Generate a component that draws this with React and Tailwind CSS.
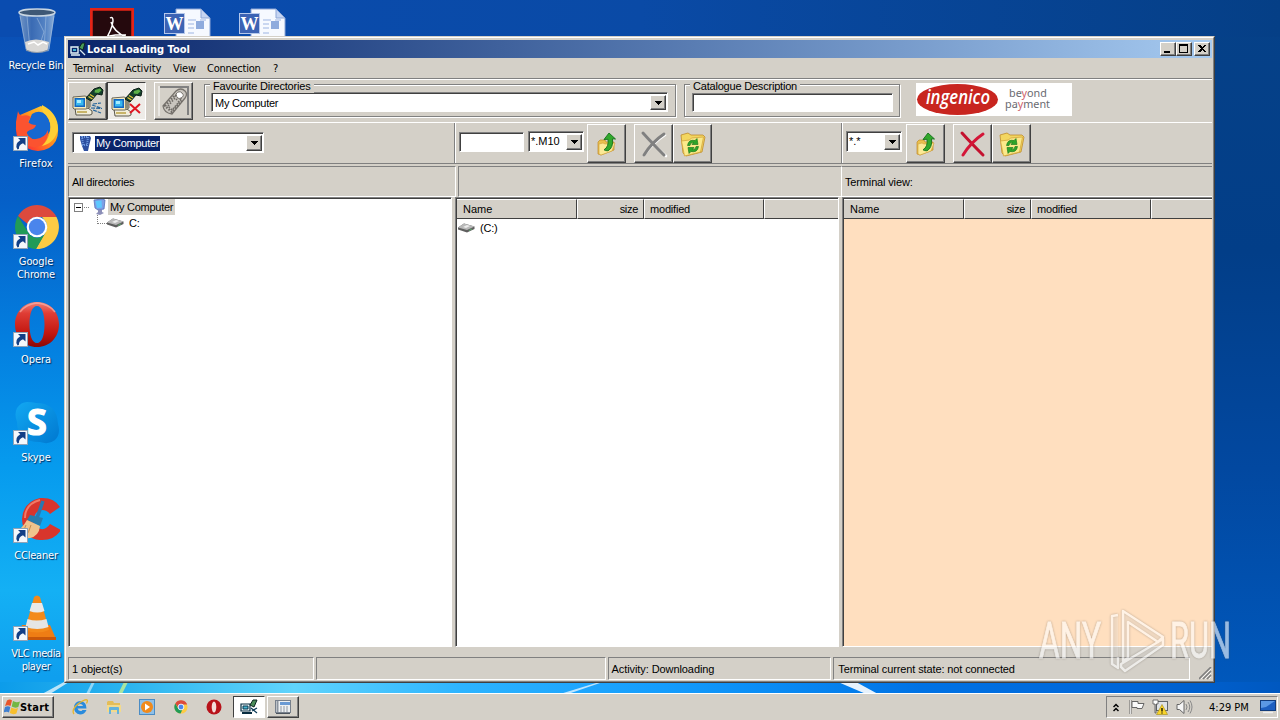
import React from "react";

const SANS = "font-['Liberation_Sans',Arial,sans-serif] text-[11px] leading-[13px] whitespace-nowrap text-black";
const UI = "font-['DejaVu_Sans_Condensed','DejaVu_Sans',sans-serif] [font-stretch:condensed] text-[11px] leading-[13px] whitespace-nowrap";
const SUNKEN = "border border-t-[#808080] border-l-[#808080] border-b-white border-r-white shadow-[inset_1px_1px_0_#404040]";
const RAISED = "bg-[#d4d0c8] border border-t-white border-l-white border-b-[#404040] border-r-[#404040] shadow-[inset_-1px_-1px_0_#808080]";

function Shortcut() {
  return (
    <g>
      <rect x="1.500" y="32.500" width="14" height="14" fill="#f4f8fc" stroke="#8fa3b8" />
      <path d="M13.500 34H6l2.300 2.300Q2 40 5.500 45.500q1.500-.5 1.500-1Q6.500 41 11 39.200l2.500 2.300z" fill="#123f86" />
    </g>
  );
}

function DesktopItem({ label, children, shortcut = true, tracking = "tracking-[-0.1px]" }) {
  return (
    <div className="flex h-[98px] w-[72px] flex-col items-center">
      <svg className="h-12 w-12 shrink-0" viewBox="0 0 48 48">
        {children}
        {shortcut && <Shortcut />}
      </svg>
      <div className={`${UI} ${tracking} mt-[5px] text-center text-white [text-shadow:1px_1px_1px_#00285a]`}>
        {label.map((l) => (
          <div key={l}>{l}</div>
        ))}
      </div>
    </div>
  );
}

function Desktop() {
  return (
    <div className="flex h-[693px] items-start">
      <div className="flex flex-col pt-1.5">
        <DesktopItem label={["Recycle Bin"]} shortcut={false} tracking="tracking-[-0.2px]">
          <defs>
            <linearGradient id="bin" x1="0" x2="1">
              <stop offset="0" stopColor="#7f9fc8" />
              <stop offset=".35" stopColor="#3f6eb4" />
              <stop offset=".75" stopColor="#5e8bc8" />
              <stop offset="1" stopColor="#9dbbdd" />
            </linearGradient>
          </defs>
          <path d="M7 6h36l-6 39q-12 4-23 0z" fill="url(#bin)" opacity=".9" />
          <path d="M8 10l6 33M15 10l3 34M34 10l-2 34M42 10l-5 33M25 12l7 14-4 12" stroke="#b8cee8" strokeWidth=".8" opacity=".6" fill="none" />
          <ellipse cx="25" cy="6.500" rx="18" ry="3.500" fill="#3e5876" stroke="#c9d6e2" strokeWidth="1.500" />
          <path d="M13 36q10-5 24 0l-1.500 8q-11 5-21 0z" fill="#d9d8d6" />
          <path d="M16 38l6-2 4 3 5-3 4 2" stroke="#fff" strokeWidth="1.500" fill="none" />
          <path d="M14 44q11 5 22 0" stroke="#8c98a6" fill="none" />
        </DesktopItem>
        <DesktopItem label={["Firefox"]} tracking="tracking-[0.15px]">
          <defs>
            <linearGradient id="ff" x1="1" x2="0" y1="0" y2="1">
              <stop offset="0" stopColor="#fff04a" />
              <stop offset=".4" stopColor="#ffa01c" />
              <stop offset=".75" stopColor="#ff4a2c" />
              <stop offset="1" stopColor="#e01865" />
            </linearGradient>
          </defs>
          <path d="M29 2q15 8 17 22 1 14-9 20-11 6-22 0Q3 37 4 23q0-7 4-12z" fill="url(#ff)" />
          <path d="M20 10q8-5 14 1 6 8 4 16-4 9-14 9-10-2-10-12z" fill="#1668d0" />
          <path d="M6 7q1 4 4 5 5-2 9 1-2 2-3 5 3 3 8 3-1 4-6 5-3 1-4 4 3 6 10 5 9-1 12-9 1 9-6 15-9 5-18-1Q3 32 4 18z" fill="#fb5330" />
          <path d="M30 1q-1 6 4 10 6 7 4 17-2 8-8 14 13-3 16-17Q46 9 30 1z" fill="#ffcf35" />
        </DesktopItem>
        <DesktopItem label={["Google", "Chrome"]}>
          <path d="M6 14A22 22 0 0 1 44 14L44.500 15H25a10 10 0 0 0-9.500 7z" fill="#dc4a3d" />
          <path d="M44.500 15A22 22 0 0 1 24 47L34 29a10 10 0 0 0 0-9l-4-5z" fill="#fdcb44" />
          <path d="M6 14A22 22 0 0 0 24 47l10-17a10 10 0 0 1-18 0z" fill="#219b57" />
          <circle cx="25" cy="25" r="10.300" fill="#fff" />
          <circle cx="25" cy="25" r="8.200" fill="#4a85ec" />
        </DesktopItem>
        <DesktopItem label={["Opera"]}>
          <defs>
            <linearGradient id="op" x1="0" x2="0" y1="0" y2="1">
              <stop offset="0" stopColor="#f08078" />
              <stop offset=".25" stopColor="#df3d35" />
              <stop offset=".7" stopColor="#c2160f" />
              <stop offset="1" stopColor="#8a0806" />
            </linearGradient>
          </defs>
          <path fillRule="evenodd" d="M25 2C38 2 47 12 47 24.500S38 47 25 47 3 37 3 24.500 12 2 25 2zM25 6c-5 0-7.500 8-7.500 18.500S20 43 25 43s7.500-8 7.500-18.500S30 6 25 6z" fill="url(#op)" />
          <path d="M8 12Q14 4 25 3q12 1 18 9" stroke="#f8b0a8" strokeWidth="1.500" fill="none" opacity=".7" />
        </DesktopItem>
        <DesktopItem label={["Skype"]}>
          <defs>
            <linearGradient id="sk" x1="0" x2="1" y1="0" y2="1">
              <stop offset="0" stopColor="#12a8f2" />
              <stop offset="1" stopColor="#0078d0" />
            </linearGradient>
          </defs>
          <path d="M15 4q5 0 9 1 21 0 22 21 3 10-3 16-6 5-15 2Q5 44 5 24 2 16 5 10q4-6 10-6z" fill="url(#sk)" />
          <text x="25" y="37" textAnchor="middle" fontSize="36" fontWeight="bold" fill="#fff" stroke="#fff" strokeWidth="1.200" fontFamily="Open Sans, sans-serif">S</text>
        </DesktopItem>
        <DesktopItem label={["CCleaner"]} tracking="tracking-[-0.2px]">
          <path d="M48 11Q42 1 28 2 11 6 10 23q1 20 18 21 14 1 21-10l-11-6q-4 6-9 5-7-1-7-9 0-9 8-10 5 0 8 4z" fill="#d8352c" />
          <path d="M28 4Q13 8 13 22" stroke="#f07a66" strokeWidth="2" fill="none" />
          <path d="M31 5l-7 20" stroke="#2a78b0" strokeWidth="3.500" />
          <path d="M18 19l13 3-3 8-13-6z" fill="#287cac" />
          <path d="M15 24l13 6q-1 10-10 12-9 2-16-5 8-4 13-13z" fill="#f0c38c" />
          <path d="M14 29q-2 7-6 10M19 29q-2 7-5 11" stroke="#c48b4e" fill="none" />
        </DesktopItem>
        <DesktopItem label={["VLC media", "player"]} tracking="tracking-[-0.4px]">
          <path d="M10 31h28l6 14H6z" fill="#ef7d14" />
          <path d="M6 43h38v3H6z" fill="#c9570a" />
          <path d="M22 3q3-3 6 0l9 33q-12 5-24 0z" fill="#f38a1b" />
          <path d="M20 9h10l2.500 8q-7 3-15 0z" fill="#e9e9e9" />
          <path d="M15.500 25q9 3 19 0l2 8q-11 4-23 0z" fill="#e5e5e5" />
        </DesktopItem>
      </div>
      <div className="flex gap-[30px] pt-2 pl-[18px]">
        <svg className="h-11 w-11" viewBox="0 0 44 44">
          <rect x="1" y="1" width="42" height="42" fill="#25090d" stroke="#e32417" strokeWidth="3.500" />
          <path d="M20 10q3-2 3 3-1 9-9 21M21 14q3 10 15 15M10 32q10-6 26-5" stroke="#fff" strokeWidth="1.500" fill="none" />
        </svg>
        <div className="flex gap-[27px]">
          {[0, 1].map((i) => (
            <svg key={i} className="h-11 w-12" viewBox="0 0 48 44">
              <path d="M12 1h25l9 9v34H12z" fill="#f6f9ff" stroke="#8da6d6" />
              <path d="M37 1v9h9z" fill="#c6d5f2" stroke="#8da6d6" />
              <path d="M24 12h8M24 16h6M24 20h6M24 25h6M36 12h6" stroke="#9db4e2" />
              <rect x="32" y="13" width="8" height="8" fill="#8fabdd" />
              <rect x=".5" y="5.500" width="20" height="20" fill="#3c63b4" stroke="#b5c8ec" />
              <text x="10.500" y="22" textAnchor="middle" fontSize="18" fontWeight="bold" fill="#fff" fontFamily="Liberation Serif, serif">W</text>
            </svg>
          ))}
        </div>
      </div>
    </div>
  );
}

function Arrow({ className = "w-4" }) {
  return (
    <span className={`flex shrink-0 items-center justify-center ${RAISED} ${className}`}>
      <svg className="h-1 w-[7px]" viewBox="0 0 7 4" shapeRendering="crispEdges"><path d="M0 0h7L3.500 4z" /></svg>
    </span>
  );
}

function TerminalPicture({ mode }) {
  return (
    <svg className="h-[30px] w-8" viewBox="0 0 32 30">
      <path d="M3 22h13l4 3v3l-2 1H4z" fill="#f2eeda" stroke="#4c483c" strokeWidth=".9" />
      <path d="M5 25h10v2H5z" fill="#c8b468" />
      <path d="M1 11l12-1 5 2v9l-4 2H2l-1-1z" fill="#f6ecc0" stroke="#4c483c" strokeWidth=".8" />
      <path d="M2.500 12h10.500v9H2.500z" fill="#1467c0" />
      <path d="M4 13.500h7.500v6H4z" fill="#38b8f0" />
      <path d="M5 14h4v3H5z" fill="#a6ecff" />
      <path d="M14 11l4 2v8l-4 1z" fill="#8f8c78" />
      <path d="M14 12l8-9 6-2 3 3-1 5-5-1-6 7z" fill="#15402c" stroke="#0b1e16" />
      <path d="M23 4l5-1.500 1.500 2-3 2.500-4-.500z" fill="#5cb048" />
      <path d="M18 8.500l4 2.500M16.500 10.500l4 2.500" stroke="#e8c83c" strokeWidth="1.300" />
      {mode === "on" ? (
        <path d="M20 19l9 3M19 22l11 .5M21 24l8 3M21 18l8-1" stroke="#23639b" strokeWidth="1.200" strokeDasharray="4 1" />
      ) : (
        <path d="M19 17l10 9M29 17l-10 9" stroke="#e01522" strokeWidth="2" />
      )}
    </svg>
  );
}

function UpFolder() {
  return (
    <svg className="h-6 w-6" viewBox="0 0 24 24">
      <path d="M3 10l2-2h5l1 2 8 0v8L6 23l-3-1z" fill="#e9c04e" stroke="#c08a28" strokeWidth=".7" />
      <path d="M4 12l4-1 2 1 10-1-3 8-11 4-2-1z" fill="#fbe996" stroke="#cf9d3c" strokeWidth=".6" />
      <path d="M14 1l6.500 6-3-.2q1 9-4.500 12-3 0-4-1 5-3 4-10.500L9 7.500z" fill="#32a92c" stroke="#14701a" strokeWidth=".9" />
    </svg>
  );
}

function RefreshFolder() {
  return (
    <svg className="h-[26px] w-[26px]" viewBox="0 0 26 26">
      <path d="M1 4l7-2 3 2 12 0 2 2-3 15-16 4-3-3z" fill="#f3d660" stroke="#bf8c29" strokeWidth=".8" />
      <path d="M1.500 10l8-1 2-2 12-1-3 15-16 4z" fill="#fbe98a" stroke="#cf9f38" strokeWidth=".7" />
      <path d="M7.500 14.500q1-6.500 7.500-5l2-2 1 6-6 0 1.500-2q-3-.5-3.500 3z" fill="#2da528" stroke="#137018" strokeWidth=".6" />
      <path d="M18.500 15.500q-1 6.500-7.500 5l-2 2-1-6 6 0-1.500 2q3 .5 3.500-3z" fill="#2da528" stroke="#137018" strokeWidth=".6" />
    </svg>
  );
}

function Cross({ gray }) {
  return (
    <svg className="h-7 w-7" viewBox="0 0 28 28">
      {gray && <path d="M4 4q9 10 22 22M25 5Q14 12 4 25" stroke="#fff" strokeWidth="2.600" strokeLinecap="round" fill="none" />}
      <path d="M3 3q9 10 21 22" stroke={gray ? "#808080" : "#c4122f"} strokeWidth="3" strokeLinecap="round" fill="none" />
      <path d="M24 4Q12 12 4 25" stroke={gray ? "#808080" : "#d41638"} strokeWidth="3" strokeLinecap="round" fill="none" />
    </svg>
  );
}

function ToolButton({ children }) {
  return <div className={`flex h-[39px] w-[39px] shrink-0 items-center justify-center ${RAISED}`}>{children}</div>;
}

function ComputerIcon({ className = "h-4 w-4" }) {
  return (
    <svg className={className} viewBox="0 0 16 16">
      <path d="M3 1l8-1 3 1-1 9-6 1-3-2z" fill="#7d9fe6" stroke="#5670b8" strokeWidth=".8" />
      <path d="M4.500 2l6-.5.5 7-5 .5z" fill="#5cc8ff" />
      <path d="M7 11h4v2l2 1-4 2-4-1 2-2z" fill="#8c8fb8" />
    </svg>
  );
}

function DriveIcon() {
  return (
    <svg className="h-[10px] w-[17px]" viewBox="0 0 17 10">
      <path d="M0 4.500l6-4 10.500 3v2.500L9 9.500 0 6.500z" fill="#5f5f5f" />
      <path d="M0 4.500l6-4 10.500 3-7.500 3.500z" fill="#b9b9b9" />
      <path d="M5 4l4-2 3 1-4 2z" fill="#ececec" />
      <path d="M11 7.500l3-1.500" stroke="#5ca86c" />
    </svg>
  );
}

function GroupBox({ title, className, titleClass, children }) {
  return (
    <div className={`h-10 pt-[5px] ${className}`}>
      <div className="h-[33px] border border-[#808080] shadow-[1px_1px_0_#fff,inset_1px_1px_0_#fff]">
        <div className="-mt-[5px] flex h-[13px] pl-[5px]">
          <span className={`${SANS} bg-[#d4d0c8] px-[3px] ${titleClass}`}>{title}</span>
        </div>
        {children}
      </div>
    </div>
  );
}

function Columns() {
  return (
    <div className={`flex h-5 bg-[#d4d0c8] ${SANS}`}>
      <div className="flex w-[120px] items-center border-t border-r border-b border-[#404040] border-t-white pt-px pl-1.5">Name</div>
      <div className="flex w-[67px] items-center justify-end border border-[#404040] border-t-white border-l-white pt-px pr-[5px] tracking-[-0.3px]">size</div>
      <div className="flex w-[120px] items-center border border-[#404040] border-t-white border-l-white pt-px pl-[5px] tracking-[-0.2px]">modified</div>
      <div className="grow border-t border-b border-l border-[#404040] border-t-white border-l-white" />
    </div>
  );
}

function CaptionButton({ children, className = "" }) {
  return (
    <div className={`flex h-[14px] w-4 items-center justify-center ${RAISED} ${className}`}>
      <svg className="h-[10px] w-3" viewBox="0 0 12 10" shapeRendering="crispEdges">{children}</svg>
    </div>
  );
}

function TaskIcon() {
  return (
    <svg className="h-4 w-[18px]" viewBox="0 0 18 16">
      <path d="M1 5h9v7H1z" fill="#e8f4f8" stroke="#082c40" strokeWidth="1.200" />
      <path d="M3 7h5v3H3z" fill="#46b4d0" stroke="#07354c" />
      <path d="M2 14h10" stroke="#082c40" strokeWidth="2" />
      <path d="M10 6l3-5 4 0-3 7z" fill="#4a8c58" stroke="#0a2420" />
      <path d="M11 9l6 5M12 12l5-3" stroke="#0e3c58" strokeWidth="1.300" />
    </svg>
  );
}

function TaskIconTitle() {
  return (
    <svg className="h-4 w-4 shrink-0" viewBox="0 0 16 16">
      <path d="M1 6h7v6H1z" fill="#0a246a" stroke="#e8f4f8" strokeWidth="1.400" />
      <path d="M3 8h3v2H3z" fill="#46b4d0" />
      <path d="M1 14h9" stroke="#e8f4f8" strokeWidth="1.500" />
      <path d="M9 7l3-5 3 0-2 7z" fill="#4a9c58" stroke="#0a2420" />
      <path d="M10 9l5 5" stroke="#dceaf0" strokeWidth="1.300" />
    </svg>
  );
}

function Window() {
  return (
    <div className="absolute top-9 left-16 h-[647px] w-[1151px] border border-[#d4d0c8] border-r-[#404040] border-b-[#404040] bg-[#d4d0c8]">
      <div className="flex h-full flex-col border border-white border-r-[#808080] border-b-[#808080] pt-0.5 pr-px pl-0.5">
        <div className="flex h-[18px] shrink-0 items-center bg-gradient-to-r from-[#0a246a] to-[#a6caf0] pr-0.5 pl-[2px]">
          <TaskIconTitle />
          <span className={`${UI} ml-px grow font-bold tracking-[0.02px] text-white`}>Local Loading Tool</span>
          <CaptionButton><path d="M2 7h6v2H2z" /></CaptionButton>
          <CaptionButton><path d="M1 0h9v9H1zM2 2v6h7V2z" fillRule="evenodd" /></CaptionButton>
          <CaptionButton className="ml-0.5"><path d="M2 1h2l2 2 2-2h2L7 4.500 10 8H8L6 6 4 8H2l3-3.500z" /></CaptionButton>
        </div>
        <div className={`${UI} flex h-5 shrink-0 items-center gap-3 pl-[5px] tracking-[-0.1px]`}>
          <span className="w-10">Terminal</span>
          <span className="w-9">Activity</span>
          <span className="w-[22px]">View</span>
          <span className="w-[54px] tracking-[-0.25px]">Connection</span>
          <span>?</span>
        </div>
        <div className="flex h-[45px] shrink-0 items-start border-t border-b border-t-[#808080] border-b-white shadow-[inset_0_1px_0_#fff]">
          <div className={`mt-[3px] flex h-[38px] w-[39px] items-center justify-center ${RAISED}`}><TerminalPicture mode="on" /></div>
          <div className="mt-[3px] flex h-[38px] w-[39px] items-center justify-center border border-t-[#404040] border-l-[#404040] border-r-white border-b-white bg-[#eeece8] pt-px pl-px"><TerminalPicture mode="off" /></div>
          <div className={`mt-[3px] ml-2 flex h-[38px] w-[39px] items-center justify-center ${RAISED}`}>
            <svg className="h-8 w-8" viewBox="0 0 32 32">
              <path d="M2 2h28v28" fill="none" stroke="#808080" strokeWidth="2" />
              <path d="M1 31V1" stroke="#fff" strokeWidth="1" />
              <path d="M5 21L18 6q5-4 9 0 3 3 0 7L14 29q-8-1-9-8z" fill="#c9c5be" stroke="#77736d" strokeWidth="1.300" />
              <path d="M7 21L17 10l7 5-10 12z" fill="none" stroke="#6f6b66" strokeWidth="2.400" strokeDasharray="1.500 1.500" />
              <path d="M10 21l7-8 4 4-7 8z" fill="none" stroke="#6f6b66" strokeWidth="1.600" strokeDasharray="1.500 1.500" />
              <path d="M18 9q3-4 6-1t-1 5-5-4z" fill="#fff" stroke="#77736d" />
            </svg>
          </div>
          <GroupBox title="Favourite Directories" className="ml-[11px] w-[472px]" titleClass="tracking-[-0.19px]">
            <div className={`-mt-px ml-[6px] flex h-[20px] w-[457px] bg-white p-px pt-[2px] pl-[3px] ${SUNKEN}`}>
              <span className={`${SANS} grow pt-[2px] tracking-[-0.25px]`}>My Computer</span>
              <Arrow />
            </div>
          </GroupBox>
          <GroupBox title="Catalogue Description" className="ml-2 w-[216px]" titleClass="tracking-[-0.2px]">
            <div className={`ml-[7px] h-[19px] w-[201px] bg-white ${SUNKEN}`} />
          </GroupBox>
          <svg className="mt-1 ml-4 h-[33px] w-[156px]" viewBox="0 0 156 33">
            <rect width="156" height="33" fill="#fff" />
            <ellipse cx="41.500" cy="16.500" rx="40.500" ry="15.500" fill="#c8251f" />
            <text x="10" y="21" textLength="64" lengthAdjust="spacingAndGlyphs" fontSize="19" fontWeight="600" fontStyle="italic" fill="#fff" fontFamily="Open Sans, sans-serif">ingenico</text>
            <g fontSize="10.800" fill="#6a6a70" fontFamily="Noto Sans, sans-serif">
              <text x="93" y="14">be<tspan fill="#d0606a">y</tspan>ond</text>
              <text x="89" y="25">pa<tspan fill="#d0606a">y</tspan>ment</text>
            </g>
          </svg>
        </div>
        <div className="flex h-[41px] shrink-0 border-b border-[#808080]">
          <div className="w-[387px] border-r border-[#808080] pt-[9px] pl-1">
            <div className={`flex h-[21px] w-[192px] bg-white p-px pt-0.5 ${SUNKEN}`}>
              <svg className="ml-[3px] h-4 w-4" viewBox="0 0 16 16">
                <path d="M3 1h10l1 2-2 8-1 5H7l-2-5-2-7z" fill="#2d4fa0" />
                <path d="M5 2l6 0-1 8H6z" fill="none" stroke="#6f9ae0" strokeWidth="2" strokeDasharray="1 1" />
              </svg>
              <span className={`${SANS} mt-px ml-[2px] h-[15px] bg-[#0a246a] px-px pt-px tracking-[-0.25px] !text-white`}>My Computer</span>
              <span className="grow" />
              <Arrow />
            </div>
          </div>
          <div className="flex w-[387px] border-r border-l border-white border-r-[#808080] pt-px pl-[3px]">
            <div className={`mt-2 h-5 w-[65px] bg-white ${SUNKEN}`} />
            <div className={`mt-[7px] ml-1 flex h-[21px] w-[56px] bg-white p-px pt-0.5 pl-[2px] ${SUNKEN}`}>
              <span className={`${SANS} grow pt-px`}>*.M10</span>
              <Arrow />
            </div>
            <div className="ml-[3px] flex">
              <ToolButton><UpFolder /></ToolButton>
              <div className="w-[8px]" />
              <ToolButton><Cross gray /></ToolButton>
              <ToolButton><RefreshFolder /></ToolButton>
            </div>
          </div>
          <div className="flex grow border-l border-white pt-px pl-[3px]">
            <div className={`mt-[7px] flex h-[21px] w-[56px] bg-white p-px pt-0.5 pl-[2px] ${SUNKEN}`}>
              <span className={`${SANS} grow pt-px`}>*.*</span>
              <Arrow />
            </div>
            <div className="ml-[4px] flex">
              <ToolButton><UpFolder /></ToolButton>
              <div className="w-[8px]" />
              <ToolButton><Cross /></ToolButton>
              <ToolButton><RefreshFolder /></ToolButton>
            </div>
          </div>
        </div>
        <div className={`mt-0.5 flex h-[31px] shrink-0 ${SANS}`}>
          <div className="w-[388px] border border-[#808080] border-r-white border-b-white pt-[9px] pl-[3px] tracking-[-0.25px]">All directories</div>
          <div className="ml-[2px] w-[384px] border border-[#808080] border-r-white border-b-white" />
          <div className="grow border-t border-b border-[#808080] border-b-white pt-[9px] pl-[3px] tracking-[-0.15px]">Terminal view:</div>
        </div>
        <div className="flex h-[450px] shrink-0">
          <div className={`w-[384px] bg-white pt-[1px] ${SUNKEN}`}>
            <div className="flex h-4 items-center pl-[5px]">
              <svg className="h-[9px] w-[17px]" viewBox="0 0 17 9" shapeRendering="crispEdges">
                <rect x=".5" y=".5" width="8" height="8" fill="#fff" stroke="#808080" />
                <path d="M2 4.500h5" stroke="#000" />
                <path d="M10 4.500h6" stroke="#808080" strokeDasharray="1 1" />
              </svg>
              <ComputerIcon />
              <span className={`${SANS} ml-[1px] h-4 bg-[#d4d0c8] px-0.5 pt-[2px] tracking-[-0.25px]`}>My Computer</span>
            </div>
            <div className="flex h-4 items-center pl-[28px]">
              <svg className="h-4 w-[10px]" viewBox="0 0 10 16" shapeRendering="crispEdges">
                <path d="M.5 0v9M1 8.500h9" fill="none" stroke="#808080" strokeDasharray="1 1" />
              </svg>
              <DriveIcon />
              <span className={`${SANS} ml-[5px] tracking-[-0.3px]`}>C:</span>
            </div>
          </div>
          <div className={`ml-[3px] w-[384px] bg-white pt-[1px] pl-px ${SUNKEN}`}>
            <Columns />
            <div className="flex h-[18px] items-center pl-[1px]">
              <DriveIcon />
              <span className={`${SANS} ml-[5px] tracking-[-0.2px]`}>(C:)</span>
            </div>
          </div>
          <div className="ml-[3px] grow border-t border-b border-l border-[#808080] border-b-white bg-[#ffdfbf] pt-[1px] pl-px shadow-[inset_1px_1px_0_#404040]">
            <Columns />
          </div>
        </div>
        <div className={`mt-[10px] flex h-[23px] shrink-0 ${SANS}`}>
          <div className="w-[246px] border border-[#808080] border-r-white border-b-white pt-[5px] pl-[3px] tracking-[-0.1px]">1 object(s)</div>
          <div className="ml-0.5 w-[290px] border border-[#808080] border-r-white border-b-white" />
          <div className="ml-0.5 w-[224px] border border-[#808080] border-r-white border-b-white pt-[5px] pl-[3px] tracking-[-0.08px]">Activity: Downloading</div>
          <div className="ml-0.5 w-[357px] border border-[#808080] border-r-white border-b-white pt-[5px] pl-1 tracking-[-0.12px]">Terminal current state: not connected</div>
          <svg className="mt-[10px] ml-[9px] h-[13px] w-[13px]" viewBox="0 0 13 13">
            <path d="M0 12L12 0M4 12L12 4M8 12L12 8" stroke="#808080" strokeWidth="1.600" />
            <path d="M2 12L12 2M6 12L12 6M10 12l2-2" stroke="#fff" strokeWidth=".8" />
          </svg>
        </div>
      </div>
    </div>
  );
}

function Taskbar() {
  return (
    <div className="relative flex h-[27px] items-start border-t border-white bg-[#d4d0c8] px-0.5 pt-0.5">
      <div className={`flex h-[22px] w-[52px] items-center ${RAISED}`}>
        <svg className="ml-px h-4 w-4 shrink-0" viewBox="0 0 16 16">
          <path d="M3 1.500q3-2 5 0L6.500 7q-2.500-1.500-5.500 0z" fill="#e8552a" />
          <path d="M9 2q3 2 7 .5L14.300 8q-3.300 1.500-6.600-.5z" fill="#73b744" />
          <path d="M1 8q3-1.500 5.300 0L5 13.500q-2-1.500-5.500 0z" fill="#3f7fd0" />
          <path d="M7.300 8.500q3.300 2 6.700.5l-1.600 5.500q-3.300 1.500-6.600-.5z" fill="#f7bf2d" />
        </svg>
        <span className={`${UI} font-bold tracking-[0.2px]`}>Start</span>
      </div>
      <div className="ml-[18px] flex h-[22px] items-center gap-[17.600px]">
        <svg className="h-4 w-4" viewBox="0 0 16 16">
          <path d="M14.500 9.500H5.500q1 3 4 2.500l1-1h4q-2 4.500-6.500 4.500Q2 14.500 2 8.500 2.500 2 8.500 2q6 .5 6 7.500zM5.500 7h5.500q-.5-2-2.700-2T5.500 7z" fill="#2a8bdc" fillRule="evenodd" />
          <path d="M2 15Q-1 11 6 5q8-6 9.500-3.500 0 1-1 3" stroke="#e6b52c" strokeWidth="1.300" fill="none" />
        </svg>
        <svg className="h-4 w-4" viewBox="0 0 16 16">
          <path d="M1 3l1-1h5l1 2h6v9H1z" fill="#e4bd58" />
          <path d="M1 6h14v7H1z" fill="#f3da8c" />
          <path d="M3 15V9q0-1 1-1h8q1 0 1 1v6h-2v-4H5v4z" fill="#63b2dc" />
        </svg>
        <svg className="h-4 w-4" viewBox="0 0 16 16">
          <rect x=".5" y=".5" width="15" height="15" fill="#8fc0e8" stroke="#4b8cc4" />
          <circle cx="8" cy="8" r="6" fill="#f08a1c" />
          <path d="M6 4.500l5 3.500-5 3.500z" fill="#fff" />
        </svg>
        <svg className="h-[14px] w-4" viewBox="0 0 16 16">
          <circle cx="8" cy="8" r="7.500" fill="#fdcb44" />
          <path d="M1.500 4a7.500 7.500 0 0 1 13 0L15 5H8L5 9z" fill="#dc4a3d" />
          <path d="M1.500 4a7.500 7.500 0 0 0 6 11.500L10 10H5z" fill="#219b57" />
          <circle cx="8" cy="8" r="3.300" fill="#4a85ec" stroke="#fff" />
        </svg>
        <svg className="h-4 w-4" viewBox="0 0 16 16">
          <circle cx="8" cy="8" r="7.500" fill="#b8121a" />
          <ellipse cx="8" cy="8" rx="2.300" ry="5.500" fill="#f4dcda" />
        </svg>
      </div>
      <div className="ml-[11px] flex h-[22px] w-8 items-center justify-center border border-t-[#404040] border-l-[#404040] border-r-white border-b-white bg-white"><TaskIcon /></div>
      <div className={`ml-0.5 flex h-[22px] w-8 items-center justify-center ${RAISED}`}>
        <svg className="h-4 w-4" viewBox="0 0 16 16">
          <rect x=".5" y="1.500" width="15" height="12" fill="#eef0f2" stroke="#77808c" />
          <path d="M5 3h10v3H5z" fill="#6a9ad4" />
          <path d="M2.500 2v11" stroke="#8c949e" strokeWidth="2" />
          <path d="M5 8h9M5 10h9M5 12h9" stroke="#8f98a4" strokeDasharray="2 1" />
          <path d="M1 14.500h14" stroke="#4c545e" />
        </svg>
      </div>
      <div className="grow" />
      <div className="flex h-[22px] w-[172px] items-center border border-t-[#808080] border-l-[#808080] border-r-white border-b-white">
        <svg className="ml-[6px] h-[9px] w-[6px]" viewBox="0 0 6 9"><path d="M.5 4L3 1.500 5.500 4M.5 8L3 5.500 5.500 8" fill="none" stroke="#000" strokeWidth="1.500" /></svg>
        <svg className="ml-[10px] h-4 w-[17px]" viewBox="0 0 17 16">
          <path d="M1.500 1v14" stroke="#666" strokeWidth="2" />
          <path d="M1.500 1v14" stroke="#fff" strokeWidth=".8" />
          <path d="M3 2.500h6v2h6l-2 5H8v-1H3z" fill="#fafafa" stroke="#666" />
        </svg>
        <svg className="ml-[6px] h-4 w-4" viewBox="0 0 16 16">
          <rect x="4.500" y="2.500" width="11" height="9" fill="#dfe2e5" stroke="#60656a" />
          <path d="M1 1h5v4H4v9H3V5H1z" fill="#fff" stroke="#555" strokeWidth=".8" />
          <path d="M10 5.500l5.500 10h-11z" fill="#f9d42a" stroke="#a38a10" strokeWidth=".6" />
          <path d="M10 9v3.500M10 13.500v1" stroke="#000" strokeWidth="1.300" />
        </svg>
        <svg className="ml-[8px] h-4 w-[17px]" viewBox="0 0 17 16">
          <path d="M1 5.500h2.500L8 1.500v13l-4.500-4H1z" fill="#f6f6f6" stroke="#666" />
          <path d="M10 5q2 3 0 6M12 3q3.500 5 0 10M14 1.500q4 6.500 0 13" stroke="#888" fill="none" />
        </svg>
        <span className={`${UI} ml-[16px] w-10`}>4:29 PM</span>
        <svg className="ml-[11px] h-[14px] w-4" viewBox="0 0 16 14">
          <rect x=".5" y=".5" width="15" height="10" fill="#1d5fc0" stroke="#123c7c" />
          <path d="M1 1h14L6 7 1 8z" fill="#5b98e4" />
          <path d="M3 12.500h10" stroke="#eee" strokeWidth="1.500" />
        </svg>
      </div>
    </div>
  );
}

export default function App() {
  return (
    <div className="relative h-[720px] w-[1280px] overflow-hidden bg-[#0058b8]">
      <div className="absolute inset-y-0 left-0 w-[66px] bg-[linear-gradient(180deg,#0b4db2_0%,#0560c8_28%,#0480e0_48%,#069bee_65%,#14b0f4_82%,#0f9fee_94%)]" />
      <div className="absolute inset-y-0 right-0 w-[66px] bg-[linear-gradient(180deg,#064188_0%,#023e88_35%,#0248a0_65%,#0058bc_95%)]" />
      <div className="absolute inset-x-0 top-0 h-[37px] bg-gradient-to-r from-[#0a4cb0] via-[#0a4aa6] to-[#053f86]" />
      <div className="absolute inset-x-0 top-[682px] h-[12px] bg-[linear-gradient(90deg,#0c9cea_0%,#2cb4ee_10%,#60d4fc_23%,#2db4ff_36%,#149cfc_52%,#0a8cf4_60%,#0072e4_72%,#0066d8_88%,#0058c0_100%)]">
        <svg className="h-full w-full" viewBox="0 0 1280 12">
          <path d="M42 12L64 0h5L50 12zM560 12l36-11h4l-32 11z" fill="#fff" opacity=".7" />
          <path d="M838 0h18l22 12h-12z" fill="#fff" opacity=".9" />
          <path d="M86 12l6-12h3l-6 12z" fill="#fff" opacity=".5" />
          <path d="M118 12l6-12h4l-6 12z" fill="#c9f08c" opacity=".8" />
        </svg>
      </div>
      <div className="relative flex flex-col">
        <Desktop />
        <Taskbar />
      </div>
      <Window />
      <svg className="absolute top-[606px] left-[1034px] h-[70px] w-[220px] [filter:drop-shadow(0_0_1px_rgba(90,80,70,.7))]" viewBox="0 0 220 70" opacity=".6">
        <g fill="#fff" stroke="#fff" strokeWidth=".9" fontFamily="Roboto, sans-serif" fontWeight="400" fontSize="50">
          <text x="5" y="52" textLength="62" lengthAdjust="spacingAndGlyphs">ANY</text>
          <text x="136" y="52" textLength="61" lengthAdjust="spacingAndGlyphs">RUN</text>
        </g>
        <path d="M84 9l-6 1v48l6 4V51M89 5l40 26-5 5-30-20v36l-5 3zM87 58v3l4 4 38-26v-6z" fill="#ffffff55" stroke="#fff" strokeWidth="2.500" strokeLinejoin="round" />
      </svg>
    </div>
  );
}
